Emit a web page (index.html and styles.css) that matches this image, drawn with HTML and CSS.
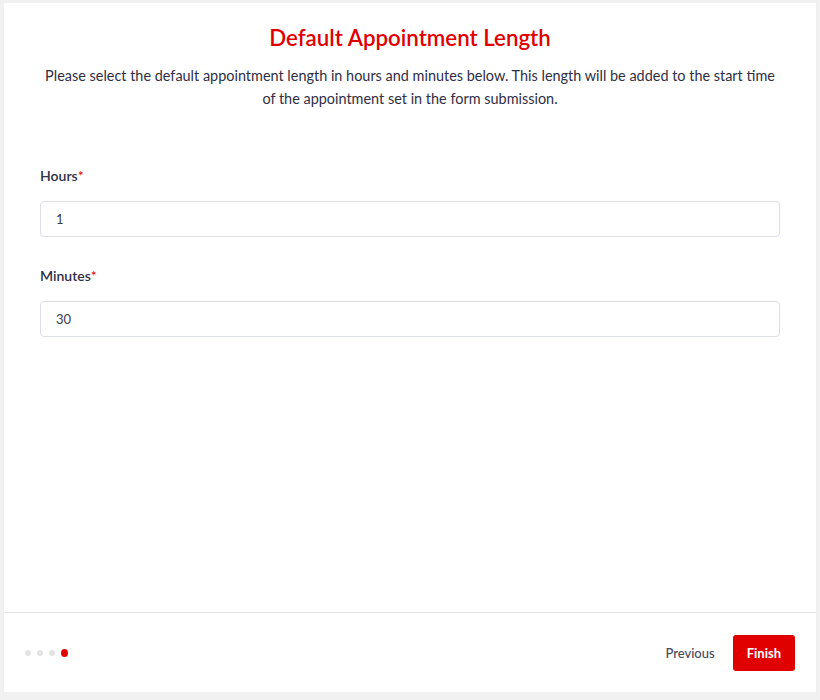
FILE: index.html
```html
<!DOCTYPE html>
<html lang="en">
<head>
  <meta charset="UTF-8" />
  <meta name="viewport" content="width=device-width, initial-scale=1.0">
  <title>Default Appointment Length</title>
  <link rel="stylesheet" href="styles.css">
</head>
<body>

  <div class="wizard-card">
    <main class="wizard-body">
      <h1 class="step-title">Default Appointment Length</h1>
      <p class="step-desc">Please select the default appointment length in hours and minutes below. This length will be added to the start time of the appointment set in the form submission.</p>

      <div class="field">
        <label for="hours" class="field-label">Hours<span class="req">*</span></label>
        <input type="text" id="hours" class="field-input" value="1">
      </div>

      <div class="field">
        <label for="minutes" class="field-label">Minutes<span class="req">*</span></label>
        <input type="text" id="minutes" class="field-input" value="30">
      </div>
    </main>

    <footer class="wizard-footer">
      <div class="steps">
        <span class="dot"></span>
        <span class="dot"></span>
        <span class="dot"></span>
        <span class="dot active"></span>
      </div>
      <div class="actions">
        <button class="btn-link">Previous</button>
        <button class="btn-primary">Finish</button>
      </div>
    </footer>
  </div>

</body>
</html>
```

FILE: styles.css
```css
:root {
  --brand-red: #e00000;
  --text-dark: #2f2f45;
  --border: #dcdfe6;
  --page-bg: #f1f1f1;
}

* {
  box-sizing: border-box;
  margin: 0;
  padding: 0;
}

body {
  background-color: var(--page-bg);
  font-family: 'Lato', 'Noto Sans', sans-serif;
  color: var(--text-dark);
  padding: 3px 4px 0;
}

.wizard-card {
  background: #ffffff;
  height: 689px;
  display: flex;
  flex-direction: column;
  box-shadow: 0 1px 2px rgba(0,0,0,0.04);
}

.wizard-body {
  flex: 1;
  padding: 21px 36px 0;
}

.step-title {
  color: var(--brand-red);
  font-size: 22.3px;
  font-weight: 600;
  line-height: 28px;
  text-align: center;
}

.step-desc {
  font-size: 14.45px;
  line-height: 23px;
  text-align: center;
  margin-top: 12px;
  padding: 0 5px;
}

.field {
  margin-top: 56px;
}

.field + .field {
  margin-top: 29px;
}

.field-label {
  display: block;
  font-size: 14px;
  font-weight: 600;
  line-height: 20px;
  margin-bottom: 15px;
}

.req {
  color: var(--brand-red);
  font-weight: 400;
}

.field-input {
  display: block;
  width: 100%;
  height: 36px;
  border: 1px solid var(--border);
  border-radius: 4px;
  padding: 0 15px;
  font-family: inherit;
  font-size: 13px;
  color: #3a3a4c;
  outline: none;
}

.wizard-footer {
  height: 80px;
  border-top: 1px solid #e4e4e4;
  display: flex;
  align-items: center;
  justify-content: space-between;
  padding: 0 21px;
}

.steps {
  display: flex;
  align-items: center;
  gap: 6px;
}

.dot {
  width: 6px;
  height: 6px;
  border-radius: 50%;
  background: #e3e3e6;
}

.dot.active {
  width: 7px;
  height: 8px;
  background: var(--brand-red);
}

.actions {
  display: flex;
  align-items: center;
}

.btn-link {
  background: none;
  border: none;
  font-family: inherit;
  font-size: 13px;
  font-weight: 500;
  color: #4a4a5c;
  padding: 0 18px;
  cursor: pointer;
}

.btn-primary {
  background: var(--brand-red);
  color: #ffffff;
  border: none;
  border-radius: 3px;
  height: 36px;
  padding: 0 14px;
  font-family: inherit;
  font-size: 13px;
  font-weight: 700;
  cursor: pointer;
}
```
